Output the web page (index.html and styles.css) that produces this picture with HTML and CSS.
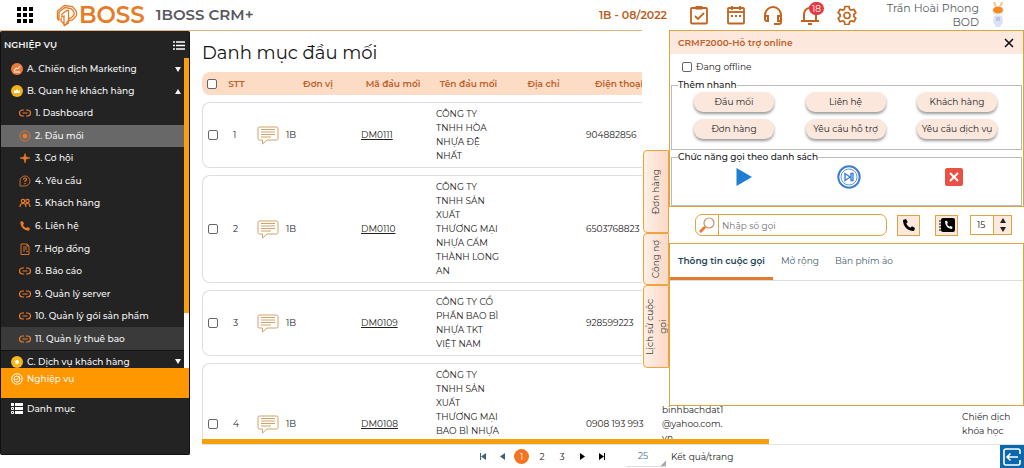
FILE: index.html
```html
<!DOCTYPE html>
<html lang="vi">
<head>
<meta charset="utf-8">
<title>1BOSS CRM+</title>
<link rel="stylesheet" href="styles.css">
</head>
<body>
<svg class="defs" aria-hidden="true">
  <symbol id="link" viewBox="0 0 12 10"><path d="M5 2H3.500a3 3 0 0 0 0 6H5M7 2h1.500a3 3 0 0 1 0 6H7M3.500 5h5" fill="none" stroke="currentColor" stroke-width="1.200"/></symbol>
  <symbol id="comment" viewBox="0 0 22 19"><path d="M2.500 1h17a1.500 1.500 0 0 1 1.500 1.500v10a1.500 1.500 0 0 1-1.500 1.500H10l-4.500 4V14h-3A1.500 1.500 0 0 1 1 12.500v-10A1.500 1.500 0 0 1 2.500 1zM4 3.500h14M4 6h14M4 8.500h14M4 11h10" fill="none" stroke="#d3a268" stroke-width="1"/></symbol>
</svg>

<header class="topbar">
  <button class="plain apps" aria-label="Ứng dụng"><svg width="17" height="16" viewBox="0 0 17 16"><path d="M0 0h4v4H0zM6 0h4v4H6zM12 0h4v4h-4zM0 6h4v4H0zM6 6h4v4H6zM12 6h4v4h-4zM0 12h4v4H0zM6 12h4v4H6zM12 12h4v4h-4z"/></svg></button>
  <div class="logo">
    <svg width="22" height="23" viewBox="0 0 22 23" fill="none" stroke="#e87b25" stroke-width="1.300"><path d="M3 16.500L1.500 15V7l7-5.500 8 1 4 5v4l-4 4.500-4 .5M3 16.500V8l6-4.500 6 1 3 3.500v3l-3 3-2.500.5M6 10l5-3.500h1.500V16l-2.500 4-2 1v-9l-2 1zM5 14v3l3 3M12.500 16v3L8 22"/></svg>
    <span>BOSS</span>
  </div>
  <div class="product">1BOSS CRM+</div>
  <div class="period">1B - 08/2022</div>
  <nav class="tools">
    <button class="plain" aria-label="Công việc"><svg width="20" height="20" viewBox="0 0 20 20" fill="none" stroke="#c2641f" stroke-width="1.800"><rect x="2" y="3" width="16" height="15.500" rx="1"/><path d="M6.500 2.800h7" stroke-width="3.500"/><path d="M6 11l3 3 6-6"/></svg></button>
    <button class="plain" aria-label="Lịch"><svg width="20" height="20" viewBox="0 0 20 20" fill="none" stroke="#c2641f" stroke-width="1.800"><rect x="2" y="3" width="16" height="15.500" rx="1"/><path d="M2 7h16"/><path d="M6 1v4M14 1v4"/><path d="M5 11h10" stroke-dasharray="2 2"/></svg></button>
    <button class="plain" aria-label="Hỗ trợ"><svg width="20" height="20" viewBox="0 0 20 20" fill="none" stroke="#c2641f" stroke-width="2"><path d="M2 12v-2a8 8 0 0 1 16 0v7q0 2-2 2h-5M2 11h3v5H4q-2 0-2-2zM18 11h-3v5h3"/></svg></button>
    <button class="plain bell" aria-label="Thông báo"><svg width="20" height="20" viewBox="0 0 20 20" fill="none" stroke="#c2641f" stroke-width="2"><path d="M4 15V9a6 6 0 0 1 12 0v6M1 16h18M10 3V1"/><path d="M8 19h4"/></svg><span class="badge">18</span></button>
    <button class="plain" aria-label="Cài đặt"><svg width="20" height="20" viewBox="0 0 20 20" fill="none" stroke="#c2641f" stroke-width="1.700" stroke-linejoin="round"><path d="M8 1.500h4l.6 2.700 1.700 1 2.600-.9 2 3.400-2 1.800v2l2 1.800-2 3.400-2.600-.9-1.700 1-.6 2.700H8l-.6-2.700-1.700-1-2.600.9-2-3.400 2-1.800v-2l-2-1.800 2-3.400 2.600.9 1.700-1z"/><circle cx="10" cy="10.500" r="3"/></svg></button>
  </nav>
  <div class="user">Trần Hoài Phong<br>BOD</div>
  <svg class="avatar" width="16" height="26" viewBox="0 0 16 26"><path d="M4 0l2 5M12 0l-2 5" stroke="#f3c48e" stroke-width="2"/><rect x="2" y="4" width="12" height="10" rx="5" fill="#e9eef5"/><ellipse cx="8" cy="8" rx="5" ry="3.500" fill="#f58a1f"/><path d="M4 14h8l1 6-3 5H6l-3-5z" fill="#dbe3f3"/><path d="M6 15h4v4H6z" fill="#b9c8e6"/></svg>
</header>

<div class="workspace">
  <aside class="sidebar">
    <div class="side-title"><h2>NGHIỆP VỤ</h2><svg width="12" height="9" viewBox="0 0 12 9" stroke="#fff"><path d="M0 1h2M3 1h9M0 4.500h2M3 4.500h9M0 8h2M3 8h9" stroke-width="1.600"/></svg></div>
    <div class="menu">
      <ul class="menu-list">
        <li class="group"><svg width="12" height="12" viewBox="0 0 12 12"><circle cx="6" cy="6" r="6" fill="#ee7b3d"/><path d="M3 8l2-3 2 1 2-3M3 9h6" stroke="#fff" fill="none"/></svg><a href="#">A. Chiến dịch Marketing</a><i class="down"></i></li>
        <li class="group"><svg width="12" height="12" viewBox="0 0 12 12"><circle cx="6" cy="6" r="6" fill="#f3b21c"/><path d="M3 8V5l1.500 1L6 4l1.500 2L9 5v3z" fill="#fff"/></svg><a href="#">B. Quan hệ khách hàng</a><i class="up"></i></li>
        <li>
          <ul class="submenu">
            <li><svg><use href="#link"/></svg><a href="#">1. Dashboard</a></li>
            <li class="active"><svg viewBox="0 0 12 12"><circle cx="6" cy="6" r="5" fill="none" stroke="currentColor" stroke-width=".8"/><circle cx="6" cy="6" r="2.500" fill="currentColor"/></svg><a href="#">2. Đầu mối</a></li>
            <li><svg viewBox="0 0 12 12"><path d="M6 1.500l1 3.500 4 1-4 1-1 4-1-4-4-1 4-1z" fill="currentColor" stroke="currentColor" stroke-width=".6"/></svg><a href="#">3. Cơ hội</a></li>
            <li><svg viewBox="0 0 12 12"><path d="M1 11V6a5 5 0 1 1 5 5z" fill="none" stroke="currentColor" stroke-width=".8"/><path d="M4.500 4.500q0-1.500 1.500-1.500t1.500 1.500Q7.500 5.500 6 6v1M6 8v1.200" fill="none" stroke="currentColor" stroke-width="1.200"/></svg><a href="#">4. Yêu cầu</a></li>
            <li><svg viewBox="0 0 12 12" fill="none" stroke="currentColor" stroke-width="1.200"><circle cx="4" cy="4" r="1.700"/><circle cx="8.500" cy="4" r="1.700"/><path d="M1 10q0-3.500 3-3.500t3 3.500M6.500 7q1-.5 2-.5 2.500 0 2.500 3.500"/></svg><a href="#">5. Khách hàng</a></li>
            <li><svg viewBox="0 0 12 12"><path d="M3.500 1L1.300 2C1.500 7 5 10.500 10 10.700l1-2.200-2.500-1.500-1.500 1Q5 7 4 5l1-1.500z" fill="currentColor"/></svg><a href="#">6. Liên hệ</a></li>
            <li><svg viewBox="0 0 12 12" fill="none" stroke="currentColor" stroke-width=".9"><path d="M2 1h6l2 2v8.500H2zM4 4h4M4 6h4M4 8h2M7 9l2-1M8 1v2h2"/></svg><a href="#">7. Hợp đồng</a></li>
            <li><svg><use href="#link"/></svg><a href="#">8. Báo cáo</a></li>
            <li><svg><use href="#link"/></svg><a href="#">9. Quản lý server</a></li>
            <li><svg><use href="#link"/></svg><a href="#">10. Quản lý gói sản phẩm</a></li>
            <li class="hover"><svg><use href="#link"/></svg><a href="#">11. Quản lý thuê bao</a></li>
          </ul>
        </li>
        <li class="group last"><svg width="12" height="12" viewBox="0 0 12 12"><circle cx="6" cy="6" r="6" fill="#f6b91d"/><circle cx="6" cy="6" r="2" fill="#fff"/></svg><a href="#">C. Dịch vụ khách hàng</a><i class="down"></i></li>
      </ul>
      <div class="track"><div class="thumb"></div></div>
    </div>
    <a class="section current" href="#"><svg width="12" height="12" viewBox="0 0 12 12" fill="none" stroke="#fff"><circle cx="6" cy="6" r="5.300"/><circle cx="6" cy="6" r="3"/><path d="M4.500 6l1 1 2-2.500"/></svg>Nghiệp vụ</a>
    <a class="section" href="#"><svg width="12" height="11" viewBox="0 0 12 11" fill="#fff"><path d="M4 0h8v3H4zM4 4h8v3H4zM4 8h8v3H4zM0 0h3v3H0z"/><path d="M.5 4.500h2v2h-2zM.5 8.500h2v2h-2z" fill="none" stroke="#fff"/></svg>Danh mục</a>
  </aside>

  <main class="main">
    <h1>Danh mục đầu mối</h1>
    <div class="table-wrap">
      <table class="leads">
        <colgroup><col class="c-check"><col class="c-no"><col class="c-icon"><col class="c-unit"><col class="c-code"><col class="c-name"><col class="c-address"><col class="c-phone"><col class="c-email"><col></colgroup>
        <thead><tr><th><input type="checkbox" aria-label="Chọn tất cả"></th><th>STT</th><th></th><th>Đơn vị</th><th>Mã đầu mối</th><th>Tên đầu mối</th><th>Địa chỉ</th><th class="phone">Điện thoại</th><th></th><th></th></tr></thead>
        <tbody>
          <tr><td><input type="checkbox" aria-label="Chọn dòng 1"></td><td class="no">1</td><td><svg class="note"><use href="#comment"/></svg></td><td>1B</td><td class="code"><a href="#">DM0111</a></td><td class="name">CÔNG TY<br>TNHH HÒA<br>NHỰA ĐỆ<br>NHẤT</td><td></td><td>904882856</td><td></td><td></td></tr>
          <tr><td><input type="checkbox" aria-label="Chọn dòng 2"></td><td class="no">2</td><td><svg class="note"><use href="#comment"/></svg></td><td>1B</td><td class="code"><a href="#">DM0110</a></td><td class="name">CÔNG TY<br>TNHH SẢN<br>XUẤT<br>THƯƠNG MẠI<br>NHỰA CẨM<br>THÀNH LONG<br>AN</td><td></td><td>6503768823</td><td></td><td></td></tr>
          <tr><td><input type="checkbox" aria-label="Chọn dòng 3"></td><td class="no">3</td><td><svg class="note"><use href="#comment"/></svg></td><td>1B</td><td class="code"><a href="#">DM0109</a></td><td class="name">CÔNG TY CỔ<br>PHẦN BAO BÌ<br>NHỰA TKT<br>VIỆT NAM</td><td></td><td>928599223</td><td></td><td></td></tr>
          <tr class="tall"><td><input type="checkbox" aria-label="Chọn dòng 4"></td><td class="no">4</td><td><svg class="note"><use href="#comment"/></svg></td><td>1B</td><td class="code"><a href="#">DM0108</a></td><td class="name">CÔNG TY<br>TNHH SẢN<br>XUẤT<br>THƯƠNG MẠI<br>BAO BÌ NHỰA</td><td></td><td>0908 193 993</td><td>binhbachdat1<br>@yahoo.com.<br>vn</td><td>Chiến dịch<br>khóa học</td></tr>
        </tbody>
      </table>
    </div>
    <div class="hscroll"><div></div></div>
    <footer class="pager">
      <button class="plain" aria-label="Trang đầu"><svg width="8" height="7" viewBox="0 0 8 7"><path d="M1 0h1v7H1zM7 0v7L2 3.500z" fill="#3c6478"/></svg></button>
      <button class="plain" aria-label="Trang trước"><svg width="8" height="7" viewBox="0 0 8 7"><path d="M6 0v7L1 3.500z" fill="#3c6478"/></svg></button>
      <button class="plain on">1</button>
      <button class="plain">2</button>
      <button class="plain">3</button>
      <button class="plain" aria-label="Trang sau"><svg width="8" height="7" viewBox="0 0 8 7"><path d="M2 0v7l5-3.500z"/></svg></button>
      <button class="plain" aria-label="Trang cuối"><svg width="8" height="7" viewBox="0 0 8 7"><path d="M1 0v7l5-3.500zM6 0h1v7H6z"/></svg></button>
      <select id="size"><option>25</option></select>
      <label for="size">Kết quả/trang</label>
      <button class="plain exit" aria-label="Quay lại"><svg width="18" height="18" viewBox="0 0 18 18" fill="none" stroke="#fff" stroke-width="1.600"><path d="M17 6V3q0-2-2-2H3Q1 1 1 3v12q0 2 2 2h12q2 0 2-2v-3M15 9H4M7.500 5.500L4 9l3.500 3.500"/></svg></button>
    </footer>
  </main>
</div>

<section class="drawer">
  <div class="side-tabs">
    <button class="tab-order"><span>Đơn hàng</span></button>
    <button class="tab-debt"><span>Công nợ</span></button>
    <button class="tab-history"><span>Lịch sử cuộc<br>gọi</span></button>
  </div>
  <div class="support">
    <div class="box">
      <div class="box-head"><h3>CRMF2000-Hỗ trợ online</h3><button class="plain" aria-label="Đóng"><svg width="10" height="10" viewBox="0 0 10 10"><path d="M1 1l8 8M9 1L1 9" stroke="#111" stroke-width="1.600"/></svg></button></div>
      <label class="offline"><input type="checkbox">Đang offline</label>
      <fieldset>
        <legend>Thêm nhanh</legend>
        <div class="quick">
          <button>Đầu mối</button><button>Liên hệ</button><button>Khách hàng</button>
          <button>Đơn hàng</button><button>Yêu cầu hỗ trợ</button><button>Yêu cầu dịch vụ</button>
        </div>
      </fieldset>
      <fieldset>
        <legend>Chức năng gọi theo danh sách</legend>
        <div class="calls">
          <button class="plain" aria-label="Gọi"><svg width="18" height="20" viewBox="0 0 18 20"><path d="M1.500 1L17 10 1.500 19z" fill="#1e7fd2"/></svg></button>
          <button class="plain" aria-label="Tiếp theo"><svg width="24" height="24" viewBox="0 0 24 24" fill="none" stroke="#3f7fd0"><circle cx="12" cy="12" r="10.700" stroke-width="2"/><circle cx="12" cy="12" r="8" stroke-width=".8"/><path d="M8 8.500v7l5-3.500zM14 8.500h2v7h-2z" stroke-width="1.400"/></svg></button>
          <button class="plain" aria-label="Dừng"><svg width="18" height="18" viewBox="0 0 18 18"><rect width="18" height="18" rx="2" fill="#ea5145"/><path d="M5 5l8 8M13 5l-8 8" stroke="#fff" stroke-width="2"/></svg></button>
        </div>
      </fieldset>
    </div>
    <div class="dial">
      <div class="search">
        <svg width="22" height="20" viewBox="0 0 22 20" fill="none"><circle cx="13" cy="8" r="5" stroke="#c3936b" stroke-width="1.200"/><path d="M9 12l-5 5" stroke="#ee7624" stroke-width="2.600"/></svg>
        <input type="text" placeholder="Nhập số gọi" aria-label="Nhập số gọi">
      </div>
      <button class="square" aria-label="Gọi số"><svg width="12" height="12" viewBox="0 0 12 12"><path d="M3 0L0 1C0 7.500 4.500 12 11 12l1-3-3-1.700-1.700 1.400Q4.500 7.500 3.300 4.700L4.700 3z"/></svg></button>
      <button class="square" aria-label="Danh bạ"><svg width="16" height="14" viewBox="0 0 16 14"><rect x="2" width="14" height="14" rx="2"/><path d="M0 3h3M0 6h3M0 9h3M0 12h3" stroke="#000"/><path d="M6 3q0 7 7 8l.5-2-2-1-1 .8Q8.500 7.800 8 5.800L9 5 8 2.800z" fill="#fff"/></svg></button>
      <div class="spin"><input type="text" value="15" aria-label="Số lượng"><div class="arrows"><i class="up"></i><i class="down"></i></div></div>
    </div>
    <div class="box call-info">
      <div class="tabs"><button class="plain selected">Thông tin cuộc gọi</button><button class="plain">Mở rộng</button><button class="plain">Bàn phím ảo</button></div>
    </div>
  </div>
</section>
</body>
</html>
```
FILE: styles.css
```css
* { box-sizing: border-box; }
body {
  margin: 0;
  height: 100vh;
  display: flex;
  flex-direction: column;
  position: relative;
  overflow: hidden;
  background: #fff;
  color: #222;
  font: 9px/14px Montserrat, Inter, "Open Sans", sans-serif;
}
button, input, select { font: inherit; color: inherit; }
h1, h2, h3, ul { margin: 0; padding: 0; }
ul { list-style: none; }
a { color: inherit; text-decoration: none; }
svg { flex: none; display: block; }
.defs { position: absolute; width: 0; height: 0; }
.plain {
  display: flex;
  align-items: center;
  justify-content: center;
  border: 0;
  padding: 0;
  background: none;
}
input[type="checkbox"] {
  appearance: none;
  display: block;
  width: 10px;
  height: 10px;
  margin: 0;
  border: 1px solid #666;
  border-radius: 2px;
  background: #fff;
}
.up, .down {
  border-left: 3px solid transparent;
  border-right: 3px solid transparent;
}
.up { border-bottom: 5px solid; }
.down { border-top: 5px solid; }

.topbar {
  display: flex;
  align-items: center;
  height: 31px;
  flex: none;
  padding: 0 18px 0 17px;
  border-bottom: 1px solid #e5b184;
}
.logo {
  display: flex;
  align-items: center;
  gap: 1px;
  margin-left: 22px;
  color: #e87b25;
  font-size: 23px;
  font-weight: 600;
}
.product {
  margin-left: 11px;
  color: #58595d;
  font-size: 15px;
  font-weight: 600;
}
.period {
  margin-left: auto;
  color: #b85e22;
  font-size: 11px;
  font-weight: 600;
}
.tools { display: flex; gap: 17px; margin-left: 22px; }
.bell { position: relative; }
.badge {
  position: absolute;
  left: 9px;
  top: -3px;
  width: 15px;
  height: 13px;
  border-radius: 7px;
  background: #e6393f;
  color: #fff;
  line-height: 13px;
}
.user {
  width: 122px;
  color: #565b60;
  font-size: 11px;
  line-height: 14px;
  text-align: right;
}
.avatar { margin-left: 11px; }

.workspace { flex: 1; display: flex; min-height: 0; }
.sidebar {
  width: 190px;
  flex: none;
  margin-bottom: 13px;
  border: 1px solid #111;
  border-top: 0;
  border-radius: 2px;
  background: #232323;
  color: #f4f4f4;
  font-weight: 500;
}
.side-title {
  display: flex;
  align-items: center;
  justify-content: space-between;
  height: 27px;
  padding: 1px 4px 0 3px;
}
.side-title h2 { font-size: 9px; font-weight: 600; }
.menu { display: flex; height: 310px; overflow: hidden; }
.menu-list { flex: 1; }
.group {
  display: flex;
  align-items: center;
  gap: 4px;
  height: 22px;
  padding: 0 3px 0 10px;
}
.group a { flex: 1; }
.last { border-top: 1px solid #111; }
.submenu {
  display: grid;
  grid-auto-rows: 1fr;
  min-height: 248px;
}
.submenu li {
  display: flex;
  align-items: center;
  gap: 4px;
  padding-left: 18px;
}
.submenu svg { width: 12px; height: 12px; color: #ed7a2b; }
.submenu .active { background: #686868; }
.submenu .hover { background: #3a3a3a; }
.track { width: 5px; background: #fff; }
.thumb { height: 255px; background: #f9a10c; }
.section {
  display: flex;
  gap: 4px;
  padding: 4px 10px 12px;
}
.section svg { margin-top: 1px; }
.current { background: #ff9800; }

.main {
  flex: 1;
  min-width: 0;
  display: flex;
  flex-direction: column;
  padding-left: 12px;
}
h1 {
  padding: 11px 0 1px;
  color: #151515;
  font-size: 18px;
  font-weight: 400;
  line-height: 22px;
}
.table-wrap { flex: 1; min-height: 0; overflow: hidden; }
.leads {
  width: 100%;
  table-layout: fixed;
  border-collapse: separate;
  border-spacing: 0 7px;
}
.c-check, .c-no { width: 23px; }
.c-icon { width: 35px; }
.c-unit { width: 70px; }
.c-code { width: 80px; }
.c-name { width: 71px; }
.c-address { width: 79px; }
.c-phone { width: 76px; }
.c-email { width: 300px; }
th {
  height: 23px;
  padding: 0;
  background: #fddcc5;
  color: #c0602a;
  font-weight: 600;
  white-space: nowrap;
}
th.phone { padding: 0 0 0 12px; text-align: left; }
th:first-child, td:first-child { padding-left: 5px; }
th:first-child { border-radius: 8px 0 0 8px; }
td {
  padding: 4px 0 4px 3px;
  border: solid #dedede;
  border-width: 1px 0;
  white-space: nowrap;
}
td:first-child { border-left-width: 1px; border-radius: 8px 0 0 8px; }
td.no { padding-left: 8px; }
td.code { padding-left: 8px; }
td.code a { text-decoration: underline; }
td.name { vertical-align: top; }
.tall { height: 122px; }
.note { width: 22px; height: 19px; margin-left: 6px; }
.hscroll { border-bottom: 1px solid #e2e2e2; }
.hscroll div { width: 69%; height: 5px; background: #f5a10e; }
.pager {
  display: flex;
  align-items: center;
  height: 23px;
  padding-left: 271px;
}
.pager .plain { width: 20px; height: 16px; }
.pager .on {
  width: 15px;
  height: 15px;
  margin: 0 3px 0 1px;
  border-radius: 50%;
  background: #f47421;
  color: #fff;
}
.pager select {
  appearance: none;
  width: 40px;
  height: 20px;
  margin: 0 5px 0 14px;
  padding: 0 12px;
  border: 0;
  border-bottom: 1px solid #ddd;
  background: linear-gradient(135deg, transparent 50%, #aaa 50%) right bottom / 6px 6px no-repeat;
  color: #46738c;
}
.pager .exit {
  width: 24px;
  height: 23px;
  margin-left: auto;
  background: #0c68ae;
}

.drawer {
  position: absolute;
  top: 30px;
  right: 0;
  display: flex;
  width: 382px;
  background: #fff;
}
.side-tabs {
  width: 27px;
  padding: 120px 0 38px 1px;
  display: flex;
  flex-direction: column;
}
.side-tabs button {
  display: flex;
  align-items: center;
  justify-content: center;
  padding: 0;
  border: 1px solid #f0a340;
  border-radius: 4px 0 0 4px;
  background: linear-gradient(90deg, #fff0e7, #fcd8c4);
  color: #444;
}
.side-tabs span { writing-mode: vertical-rl; transform: rotate(180deg); }
.tab-order, .tab-history { height: 83px; }
.tab-history span { text-align: center; line-height: 13px; }
.tab-debt { height: 52px; }
.support { flex: 1; min-width: 0; }
.box { border: 1px solid #dba53f; }
.box-head {
  display: flex;
  align-items: center;
  justify-content: space-between;
  height: 23px;
  padding: 0 9px 0 8px;
  background: #fce8dc;
}
.box-head h3 { color: #c0602a; font-size: 9px; font-weight: 600; }
.offline {
  display: flex;
  align-items: center;
  gap: 4px;
  height: 24px;
  padding: 2px 0 0 12px;
}
fieldset {
  margin: 0 1px;
  padding: 0;
  border: 1px solid #bbb;
}
legend { height: 14px; margin-left: 6px; padding: 0; font-weight: 500; }
.quick {
  display: grid;
  grid-template-columns: repeat(3, 80px);
  justify-content: space-between;
  gap: 7px;
  padding: 0 24px 10px 22px;
}
.quick button {
  height: 20px;
  padding: 0;
  border: 0;
  border-radius: 9px;
  background: #fce7dc;
  box-shadow: 0 2px 3px #999;
  white-space: nowrap;
}
.calls {
  display: grid;
  grid-template-columns: repeat(3, 1fr);
  justify-items: center;
  align-items: center;
  padding: 1px 15px 16px 19px;
}
.dial {
  display: flex;
  align-items: center;
  height: 36px;
  padding: 0 12px 0 26px;
}
.search {
  display: flex;
  align-items: center;
  flex: 1;
  min-width: 0;
  height: 22px;
  margin-right: 10px;
  border: 1px solid #dba53f;
  border-radius: 7px;
}
.search input {
  flex: 1;
  min-width: 0;
  height: 20px;
  padding: 0 3px;
  border: 0;
  border-left: 1px solid #dba53f;
  background: none;
}
.square {
  display: flex;
  align-items: center;
  justify-content: center;
  width: 23px;
  height: 21px;
  margin-right: 15px;
  padding: 0;
  border: 1px solid #dba53f;
  background: #fce8dc;
}
.square + .spin { margin-left: -3px; }
.spin { display: flex; width: 42px; height: 20px; border: 1px solid #dba53f; }
.spin input { width: 22px; padding: 0 0 0 6px; border: 0; background: none; }
.arrows {
  flex: 1;
  display: flex;
  flex-direction: column;
  align-items: center;
  justify-content: center;
  gap: 4px;
  border-left: 1px solid #dba53f;
  background: #fce8dc;
}
.call-info { height: 163px; }
.tabs { display: flex; border-bottom: 1px solid #ddd; color: #45606b; }
.tabs button { height: 36px; padding: 0 8px; border-bottom: 3px solid transparent; }
.tabs .selected { border-color: #e27a30; color: #24475a; font-weight: 600; }
```
